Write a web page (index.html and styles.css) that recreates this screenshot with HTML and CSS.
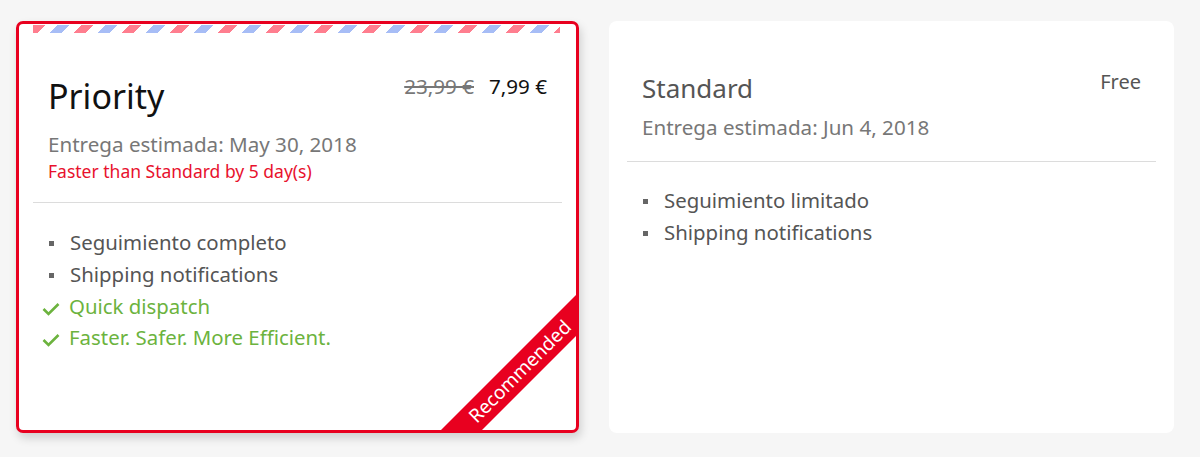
FILE: index.html
```html
<!DOCTYPE html>
<html>
<head>
<meta charset="utf-8">
<link rel="stylesheet" href="styles.css">
</head>
<body>
<div class="options">
  <div class="card card-priority">
    <div class="airmail"></div>
    <div class="head">
      <div class="head-top">
        <h2 class="title">Priority</h2>
        <div class="price"><span class="old">23,99 €</span><span class="new">7,99 €</span></div>
      </div>
      <div class="eta">Entrega estimada: May 30, 2018</div>
      <div class="faster">Faster than Standard by 5 day(s)</div>
    </div>
    <div class="divider"></div>
    <ul class="features">
      <li class="bullet">Seguimiento completo</li>
      <li class="bullet">Shipping notifications</li>
      <li class="check"><svg class="tick" viewBox="0 0 18 14" width="18" height="14"><path d="M1.5 7 L6.5 12 L16.5 2" fill="none" stroke="#6cb33e" stroke-width="2.6"/></svg>Quick dispatch</li>
      <li class="check"><svg class="tick" viewBox="0 0 18 14" width="18" height="14"><path d="M1.5 7 L6.5 12 L16.5 2" fill="none" stroke="#6cb33e" stroke-width="2.6"/></svg>Faster. Safer. More Efficient.</li>
    </ul>
    <div class="ribbon">Recommended</div>
  </div>
  <div class="card card-standard">
    <div class="head">
      <div class="head-top">
        <h2 class="title">Standard</h2>
        <div class="price"><span class="free">Free</span></div>
      </div>
      <div class="eta">Entrega estimada: Jun 4, 2018</div>
    </div>
    <div class="divider"></div>
    <ul class="features">
      <li class="bullet">Seguimiento limitado</li>
      <li class="bullet">Shipping notifications</li>
    </ul>
  </div>
</div>
</body>
</html>
```
FILE: styles.css
```css
* { box-sizing: border-box; }
html, body { margin: 0; padding: 0; }
body {
  background: #f6f6f6;
  font-family: "Noto Sans", "Open Sans", sans-serif;
  width: 1200px;
  height: 457px;
  overflow: hidden;
}
.options {
  display: flex;
  gap: 30px;
  padding: 21px 0 0 16px;
}
.card {
  position: relative;
  overflow: hidden;
  background: #fff;
  height: 412px;
}
.card-priority {
  width: 563px;
  border: 3px solid #e8001f;
  border-radius: 7px;
  box-shadow: 2px 5px 10px rgba(0,0,0,0.16);
  padding: 0 14px;
}
.card-standard {
  width: 565px;
  border-radius: 8px;
  padding: 0 18px;
}
.airmail {
  height: 8px;
  margin: 1px 2px 0 0;
  background: repeating-linear-gradient(135deg,
    #ff7e8f 0 8.5px, #fff 8.5px 17px, #a7bdf6 17px 25.5px, #fff 25.5px 34px);
}
.head { padding: 0 15px; }
.card-priority .head { padding-top: 41px; padding-bottom: 18px; }
.card-standard .head { padding-top: 50px; padding-bottom: 20px; }
.head-top {
  display: flex;
  justify-content: space-between;
  align-items: flex-start;
}
.title {
  margin: 0;
  font-weight: 400;
}
.card-priority .title {
  font-size: 34px;
  line-height: 44px;
  color: #111;
}
.card-standard .title {
  font-size: 26px;
  line-height: 34px;
  color: #555;
}
.price {
  font-size: 20px;
  line-height: 26px;
}
.card-priority .price { font-size: 20.6px; margin-top: -1px; }
.card-standard .price { margin-top: -2px; }
.old {
  color: #777;
  text-decoration: line-through;
  margin-right: 15px;
}
.new { color: #111; }
.free { color: #555; }
.eta {
  font-size: 20.6px;
  line-height: 28px;
  color: #777;
}
.card-priority .eta { margin-top: 12px; }
.card-standard .eta { margin-top: 8px; }
.faster {
  font-size: 17.5px;
  line-height: 26px;
  color: #e8112d;
}
.divider {
  height: 1px;
  background: #dcdcdc;
}
.features {
  list-style: none;
  margin: 0;
  padding: 22px 15px 0 15px;
  font-size: 20.4px;
}
.card-priority .features { padding-top: 23px; }
.features li {
  display: flex;
  align-items: center;
  color: #555;
  height: 32px;
}
.features li.bullet::before {
  content: "";
  width: 5px;
  height: 5px;
  background: #666;
  margin: 2px 16px 0 1px;
  flex: none;
}
.features li.check { color: #6cb33e; height: 31px; }
.tick {
  flex: none;
  margin: 7px 9px 0 -6px;
}
.ribbon {
  position: absolute;
  left: 371px;
  top: 333px;
  width: 260px;
  height: 29px;
  background: #e8001f;
  color: #fff;
  font-size: 19px;
  line-height: 29px;
  text-align: center;
  transform: rotate(-45deg);
}
```
